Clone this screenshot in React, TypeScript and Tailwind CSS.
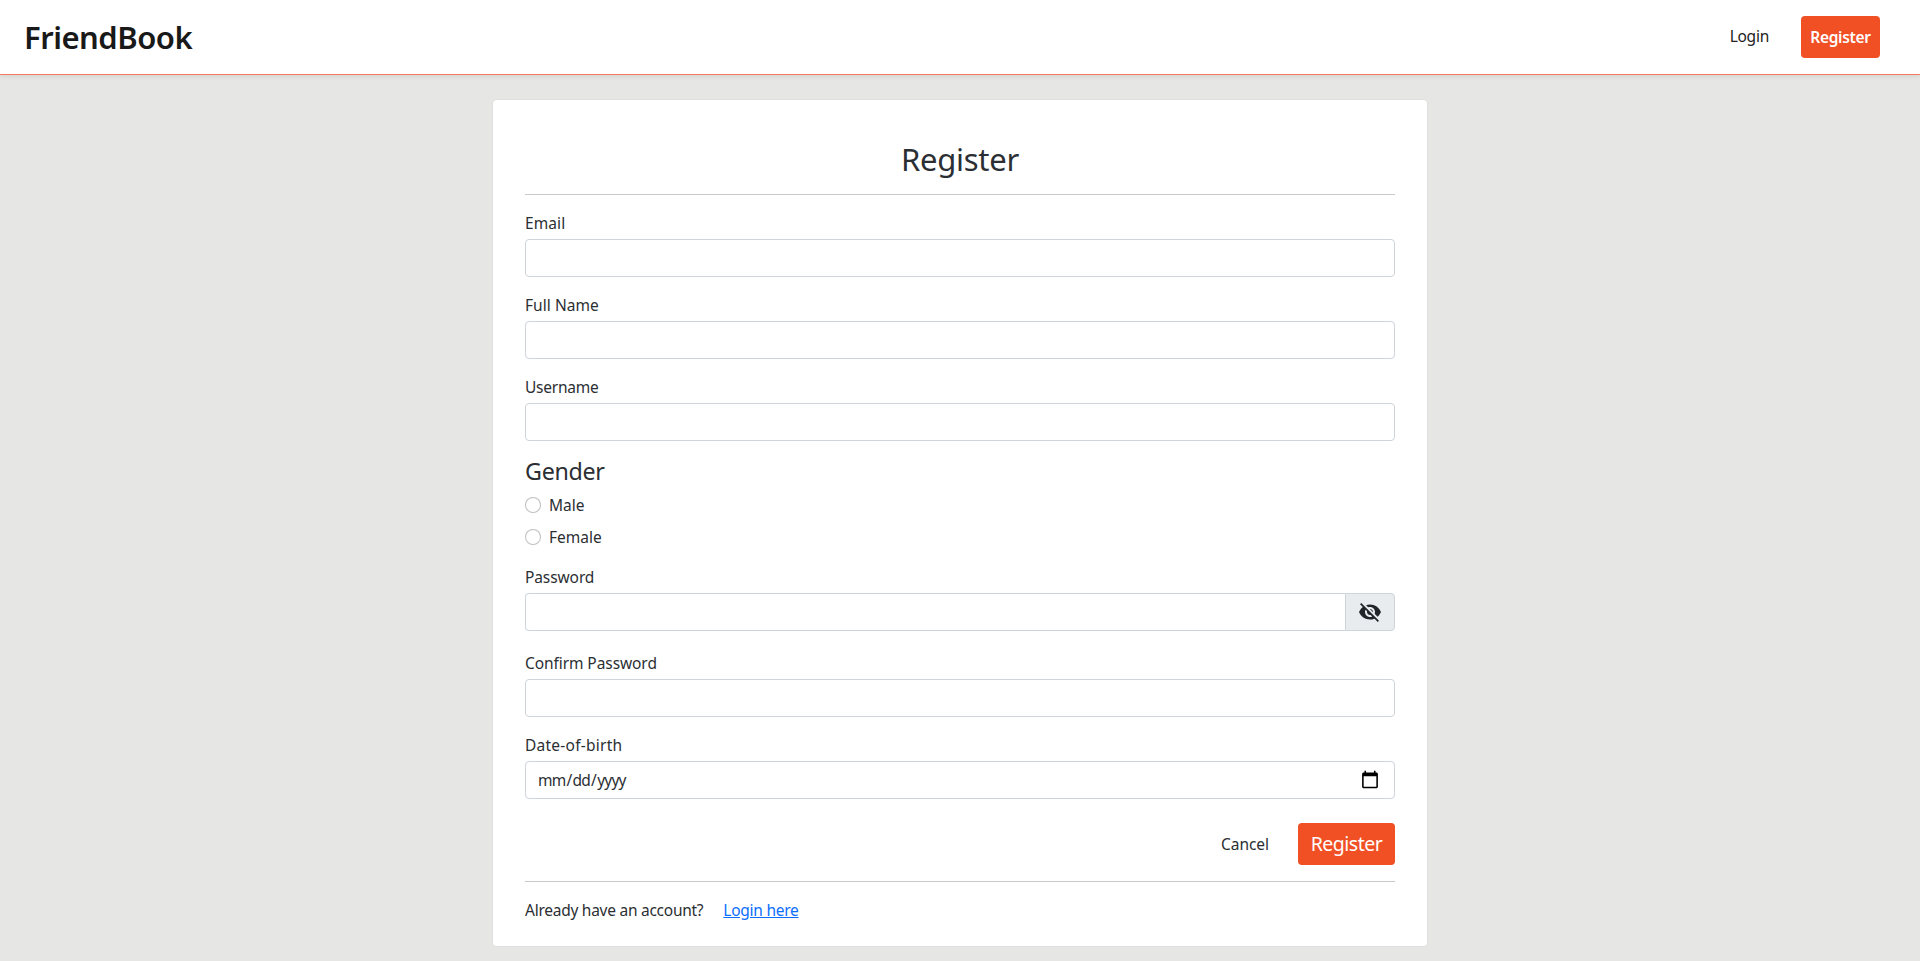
import React from "react";
import { MdVisibilityOff } from "react-icons/md";

const inputClass =
  "block h-[38px] w-full rounded border border-[#ced4da] bg-white px-3 py-1.5 text-[15.5px] leading-6 text-[#2b2f33] outline-none";

interface FieldProps {
  id: string;
  label: string;
  type?: string;
  tracking?: string;
}

function Field({ id, label, type = "text", tracking = "" }: FieldProps) {
  return (
    <div className="mb-4 flex flex-col gap-1">
      <label htmlFor={id} className={`h-6 self-start ${tracking}`}>{label}</label>
      <input id={id} type={type} className={inputClass} />
    </div>
  );
}

function Radio({ id, label }: { id: string; label: string }) {
  return (
    <div className="flex h-6 items-start gap-2">
      <input
        id={id}
        type="radio"
        name="gender"
        className="mt-1 size-4 appearance-none rounded-full border border-black/25 bg-white checked:border-[5px] checked:border-[#f15025]"
      />
      <label htmlFor={id}>{label}</label>
    </div>
  );
}

export default function App() {
  return (
    <div className="min-h-[961px] bg-[#e6e6e4] font-['Noto_Sans',sans-serif] text-[15.5px] leading-6 text-[#2b2f33]">
      <header className="flex h-[75px] items-center justify-between border-b border-[#f47c5b] bg-white pr-10 pl-6 shadow-[0_2px_4px_rgba(0,0,0,0.075)]">
        <a href="#" className="text-[31px] leading-[48px] font-semibold tracking-[-0.5px] text-[#191919]">FriendBook</a>
        <nav className="flex items-center gap-8">
          <a href="#" className="pb-0.5 tracking-[-0.25px] text-[#222222]">Login</a>
          <a href="#" className="flex h-[42px] w-[79px] items-center justify-center rounded bg-[#f15025] font-semibold tracking-[-0.3px] text-white">
            Register
          </a>
        </nav>
      </header>

      <main className="mx-auto mt-6 h-[848px] w-[936px] rounded border border-[#dfdfdf] bg-white px-8 pt-10">
        <h1 className="mb-[15px] text-center text-[31px] leading-[39px] tracking-[-0.25px]">Register</h1>
        <hr className="mb-4 border-[#c8c9ca]" />
        <form>
          <Field id="email" label="Email" type="email" tracking="tracking-[0.1px]" />
          <Field id="name" label="Full Name" tracking="tracking-[0.05px]" />
          <Field id="username" label="Username" tracking="tracking-[-0.25px]" />

          <h2 className="mb-[7px] text-[23.25px] leading-[29px] tracking-[-0.3px]">Gender</h2>
          <div className="mb-4 flex flex-col gap-2">
            <Radio id="male" label="Male" />
            <Radio id="female" label="Female" />
          </div>

          <div className="mb-5 flex flex-col gap-1">
            <label htmlFor="password" className="h-6 self-start tracking-[-0.1px]">Password</label>
            <div className="flex">
              <input
                id="password"
                type="password"
                className="h-[38px] min-w-0 flex-1 rounded-l border border-r-0 border-[#ced4da] bg-white px-3 outline-none"
              />
              <button
                type="button"
                aria-label="Show password"
                className="flex h-[38px] w-[50px] items-center justify-center rounded-r border border-[#ced4da] bg-[#e9ecef] text-[#212529]"
              >
                <MdVisibilityOff className="size-6" />
              </button>
            </div>
          </div>

          <Field id="confirm" label="Confirm Password" type="password" tracking="tracking-[-0.08px]" />

          <div className="mb-6 flex flex-col gap-1">
            <label htmlFor="dob" className="h-6 self-start tracking-[0.25px]">Date-of-birth</label>
            <input
              id="dob"
              type="date"
              className={`${inputClass} pl-[11px] tracking-[-0.75px] [&::-webkit-calendar-picker-indicator]:mr-0.5 [&::-webkit-calendar-picker-indicator]:size-5 [&::-webkit-calendar-picker-indicator]:p-0`}
            />
          </div>

          <div className="mb-4 flex items-center justify-end gap-[29px]">
            <a href="#" className="tracking-[-0.05px]">Cancel</a>
            <button type="submit" className="h-[42px] w-[97px] rounded bg-[#f15025] text-[19.5px] tracking-[-0.5px] text-white">Register</button>
          </div>
        </form>
        <hr className="mb-4 border-[#c8c9ca]" />
        <p className="flex gap-5 tracking-[-0.26px]">
          Already have an account?
          <a href="#" className="text-[#0d6efd] underline">Login here</a>
        </p>
      </main>
    </div>
  );
}
